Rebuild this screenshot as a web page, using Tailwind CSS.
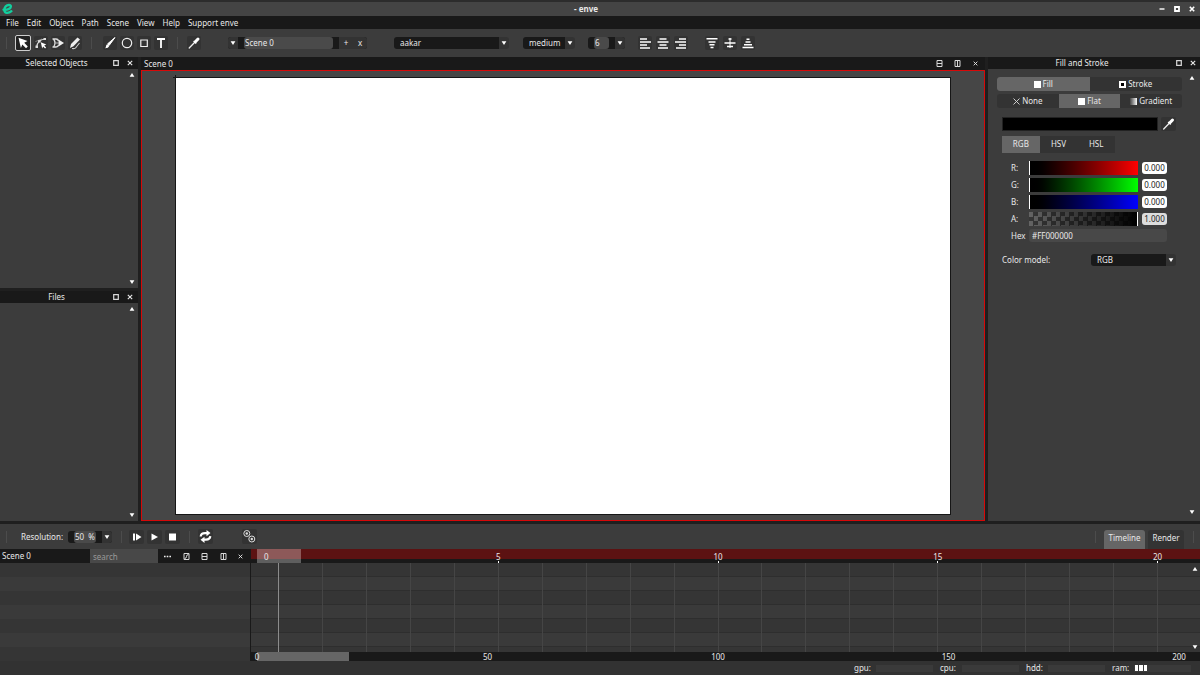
<!DOCTYPE html>
<html lang="en">
<head>
  <meta charset="UTF-8">
  <meta name="viewport" content="width=device-width, initial-scale=1.0">
  <title>enve</title>
  <script src="https://cdn.jsdelivr.net/npm/@tailwindcss/browser@4"></script>
</head>
<body class="min-h-screen flex flex-col overflow-hidden bg-[#1f1f1f] text-[#e8e8e8] text-[8px] leading-[12px] font-['Noto_Sans','Open_Sans',sans-serif]">

  <!-- Shared icons -->
  <svg class="hidden">
    <symbol id="down" viewBox="0 0 6 6"><path d="M.6 1.200h4.800L3 5z" fill="#fff"/></symbol>
    <symbol id="up" viewBox="0 0 6 6"><path d="M.6 4.800h4.800L3 1z" fill="#fff"/></symbol>
    <symbol id="close" viewBox="0 0 6 6"><path d="M.8.8l4.4 4.4M5.2.8L.8 5.2" stroke="#e8e8e8" stroke-width="1.1"/></symbol>
    <symbol id="float" viewBox="0 0 6 6"><path d="M.7.7h4.6v4.6H.7z" fill="none" stroke="#d8d8d8" stroke-width="1.2"/></symbol>
    <symbol id="split-h" viewBox="0 0 7 7"><path d="M1 .5h5v6H1zM1 3.5h5" fill="none" stroke="#d8d8d8"/></symbol>
    <symbol id="split-v" viewBox="0 0 7 7"><path d="M1 .5h5v6H1zM3.500 .5v6" fill="none" stroke="#d8d8d8"/></symbol>
    <symbol id="picker" viewBox="0 0 14 14"><path d="M2.2 12L8 6" stroke="#eee" stroke-width="1.3" stroke-linecap="round"/><path d="M6.6 4.9l2.6 2.6" stroke="#fff" stroke-width="1.4"/><path d="M8.6 5.5L11 3" stroke="#fff" stroke-width="3" stroke-linecap="round"/></symbol>
  </svg>

  <!-- Title bar -->
  <header class="h-4 shrink-0 flex items-center border-t-2 border-[#2c2c2c] bg-[#444] px-[2px]">
    <svg class="w-[11px] h-3" viewBox="0 0 11 12"><path d="M1.500 6.700C5 7.200 8.800 5.800 8.900 3.600C9 1.600 5.600 1.400 3.700 3.400C1.700 5.600 1.800 9.700 4.800 9.900C6.700 10 8.200 9.300 9.400 8.200" fill="none" stroke="#12cf9f" stroke-width="2.300" stroke-linecap="round"/></svg>
    <h1 class="flex-1 text-center font-bold">- enve</h1>
    <div class="flex gap-[9px] pr-[3px]">
      <button type="button" aria-label="Minimize"><svg class="w-[6px] h-[6px]" viewBox="0 0 6 6"><path d="M.5 3h5" stroke="#fff" stroke-width="1.4"/></svg></button>
      <button type="button" aria-label="Maximize"><svg class="w-[6px] h-[6px]" viewBox="0 0 6 6"><path d="M1 1h4v4H1z" fill="none" stroke="#fff" stroke-width="1.8"/></svg></button>
      <button type="button" aria-label="Close"><svg class="w-[6px] h-[6px]" viewBox="0 0 6 6"><path d="M.8.8l4.4 4.4M5.2.8L.8 5.2" stroke="#fff" stroke-width="1.6"/></svg></button>
    </div>
  </header>

  <!-- Menu -->
  <nav class="h-[13px] shrink-0 flex items-center gap-2 pl-[6px] bg-[#191919]">
    <button type="button">File</button>
    <button type="button">Edit</button>
    <button type="button">Object</button>
    <button type="button">Path</button>
    <button type="button">Scene</button>
    <button type="button">View</button>
    <button type="button">Help</button>
    <button type="button">Support enve</button>
  </nav>

  <!-- Tools -->
  <div class="h-7 shrink-0 flex items-center bg-[#3c3c3c] pl-[6px]">
    <div class="w-px h-3 bg-[#4c4c4c]"></div>
    <div class="flex items-center gap-[3px] ml-2">
      <button type="button" aria-label="Select" class="w-4 h-4 rounded-[2px] border border-[#ccc] bg-[#222]"><svg class="w-[14px] h-[14px]" viewBox="0 0 14 14"><path d="M2.500 1.700l9 3.400-3.300 1.600 3.600 3.800-1.800 1.800-3.700-3.800-1.400 3.400z" fill="#fff"/></svg></button>
      <button type="button" aria-label="Edit points" class="w-[14px] h-[14px] rounded-[2px] bg-[#333]"><svg viewBox="0 0 14 14"><path d="M2.800 11C3 6 5.500 3.800 11 3" fill="none" stroke="#ddd" stroke-width="1.200"/><path d="M1.500 9.500h2.500v2.500H1.500zM9.500 2h2.500v2H9.500zM4 4h2.600v2.600H4z" fill="#ddd"/><path d="M1.500 5.500L8 3" stroke="#bbb" stroke-width=".6"/><path d="M6.800 6.300l5.500 2.200-2.100.9 1.900 2-1 1-2-2-.9 2z" fill="#fff"/></svg></button>
      <button type="button" aria-label="Path boundary" class="w-[14px] h-[14px] rounded-[2px] bg-[#333]"><svg viewBox="0 0 14 14"><path d="M1.500 3h3.500q2 0 2.500 2M1.500 11h3.500q2 0 2.500-2M2.500 3q3 4 0 8" fill="none" stroke="#ddd" stroke-width="1.300"/><path d="M7.500 3.500v7L13 7z" fill="#eee"/><path d="M4.500 7h3" stroke="#ddd" stroke-width=".8"/></svg></button>
      <button type="button" aria-label="Draw path" class="w-[14px] h-[14px] rounded-[2px] bg-[#333]"><svg viewBox="0 0 14 14"><path d="M2 12l1-4 6.500-6.500 2.500 2-6.500 6.800z" fill="#eee"/><path d="M4 12.500q3 .5 4-1t3.500-4.500" fill="none" stroke="#ccc" stroke-width="1.100"/></svg></button>
    </div>
    <div class="w-px h-3 bg-[#4c4c4c] ml-[9px]"></div>
    <div class="flex items-center gap-[3px] ml-[11px]">
      <button type="button" aria-label="Brush" class="w-[14px] h-[14px] rounded-[2px] bg-[#333]"><svg viewBox="0 0 14 14"><path d="M12 1.500L6.300 9.200 4.700 7.800z" fill="#fff" stroke="#fff" stroke-width="1"/><path d="M4.500 8.200l1.800 1.600q-.8 2.500-4.300 2.500 1.200-.8 1-2.300.3-1.500 1.500-1.800z" fill="#fff"/></svg></button>
      <button type="button" aria-label="Circle" class="w-[14px] h-[14px] rounded-[2px] bg-[#333]"><svg viewBox="0 0 14 14"><circle cx="7" cy="7" r="4.700" fill="none" stroke="#eee" stroke-width="1.200"/></svg></button>
      <button type="button" aria-label="Rectangle" class="w-[14px] h-[14px] rounded-[2px] bg-[#333]"><svg viewBox="0 0 14 14"><path d="M3.800 4h6.500v6.500H3.800z" fill="none" stroke="#eee" stroke-width="1.200"/></svg></button>
      <button type="button" aria-label="Text" class="w-[14px] h-[14px] rounded-[2px] bg-[#333]"><svg viewBox="0 0 14 14"><path d="M3 3h8M7 3v9" stroke="#fff" stroke-width="1.800" fill="none"/></svg></button>
    </div>
    <div class="w-px h-3 bg-[#4c4c4c] ml-[9px]"></div>
    <button type="button" aria-label="Pick color" class="w-[14px] h-[14px] rounded-[2px] bg-[#333] ml-[9px]"><svg class="w-[14px] h-[14px]"><use href="#picker"/></svg></button>

    <div class="flex h-3 ml-[27px] rounded-[3px] overflow-hidden bg-[#191919]">
      <button type="button" aria-label="Scene list" class="w-[10px] flex items-center justify-center bg-[#333]"><svg class="w-[6px] h-[6px]"><use href="#down"/></svg></button>
      <input aria-label="Scene name" value="Scene 0" class="w-[89px] mx-[6px] pl-px rounded-[3px] bg-[#4a4a4a]">
      <button type="button" class="w-[14px] bg-[#333]">+</button>
      <button type="button" class="w-[14px] bg-[#333]">x</button>
    </div>
    <div class="flex h-3 ml-[27px] rounded-[3px] overflow-hidden">
      <select aria-label="Font family" class="appearance-none w-[105px] pl-[6px] bg-[#191919]"><option>aakar</option></select>
      <span class="w-[10px] flex items-center justify-center bg-[#333]"><svg class="w-[6px] h-[6px]"><use href="#down"/></svg></span>
    </div>
    <div class="flex h-3 ml-[14px] rounded-[3px] overflow-hidden">
      <select aria-label="Font style" class="appearance-none w-[42px] pl-[6px] bg-[#191919]"><option>medium</option></select>
      <span class="w-[10px] flex items-center justify-center bg-[#333]"><svg class="w-[6px] h-[6px]"><use href="#down"/></svg></span>
    </div>
    <div class="flex h-3 ml-[13px] rounded-[3px] overflow-hidden bg-[#191919]">
      <input aria-label="Font size" value="6" class="w-[15px] mx-[6px] pl-px rounded-[3px] bg-[#4a4a4a]">
      <span class="w-[10px] flex items-center justify-center bg-[#333]"><svg class="w-[6px] h-[6px]"><use href="#down"/></svg></span>
    </div>
    <div class="flex gap-1 ml-[13px]">
      <button type="button" aria-label="Align left" class="w-[14px] h-[14px] rounded-[2px] bg-[#333]"><svg viewBox="0 0 14 14"><path d="M2 3h7M2 6h11M2 9h7M2 12h10" stroke="#fff" stroke-width="1.500"/></svg></button>
      <button type="button" aria-label="Align center" class="w-[14px] h-[14px] rounded-[2px] bg-[#333]"><svg viewBox="0 0 14 14"><path d="M3.500 3h7M1.500 6h11M3.500 9h7M2 12h10" stroke="#fff" stroke-width="1.500"/></svg></button>
      <button type="button" aria-label="Align right" class="w-[14px] h-[14px] rounded-[2px] bg-[#333]"><svg viewBox="0 0 14 14"><path d="M5 3h7M1 6h11M5 9h7M2 12h10" stroke="#fff" stroke-width="1.500"/></svg></button>
    </div>
    <div class="flex gap-1 ml-[17px]">
      <button type="button" aria-label="Align top" class="w-[14px] h-[14px] rounded-[2px] bg-[#333]"><svg viewBox="0 0 14 14"><path d="M1.500 2.800h11M3.500 6h7M4.500 8.800h5M5.500 11.500h3" stroke="#fff" stroke-width="1.500"/></svg></button>
      <button type="button" aria-label="Align middle" class="w-[14px] h-[14px] rounded-[2px] bg-[#333]"><svg viewBox="0 0 14 14"><path d="M5.500 3h3M1.500 7h11M4 10.500h6" stroke="#fff" stroke-width="1.600"/><path d="M7 2v10" stroke="#fff"/></svg></button>
      <button type="button" aria-label="Align bottom" class="w-[14px] h-[14px] rounded-[2px] bg-[#333]"><svg viewBox="0 0 14 14"><path d="M5.500 3.200h3M4.500 6h5M3 8.700h8M1.500 11.500h11" stroke="#fff" stroke-width="1.500"/></svg></button>
    </div>
  </div>

  <main class="flex-1 flex gap-[3px] min-h-0">
    <!-- Left docks -->
    <aside class="w-[138px] shrink-0 flex flex-col gap-[3px]">
      <section class="flex-1 flex flex-col bg-[#3c3c3c]">
        <div class="h-3 flex items-center bg-[#191919] pr-[5px]">
          <h2 class="flex-1 text-center">Selected Objects</h2>
          <button type="button" aria-label="Float" class="mr-2"><svg class="w-[6px] h-[6px]"><use href="#float"/></svg></button>
          <button type="button" aria-label="Close"><svg class="w-[6px] h-[6px]"><use href="#close"/></svg></button>
        </div>
        <div class="flex-1 flex flex-col justify-between items-end pt-[3px] pb-[3px] pr-[3px]">
          <svg class="w-[6px] h-[6px]"><use href="#up"/></svg>
          <svg class="w-[6px] h-[6px]"><use href="#down"/></svg>
        </div>
      </section>
      <section class="flex-1 flex flex-col bg-[#3c3c3c]">
        <div class="h-3 flex items-center bg-[#191919] pr-[5px]">
          <h2 class="flex-1 text-center">Files</h2>
          <button type="button" aria-label="Float" class="mr-2"><svg class="w-[6px] h-[6px]"><use href="#float"/></svg></button>
          <button type="button" aria-label="Close"><svg class="w-[6px] h-[6px]"><use href="#close"/></svg></button>
        </div>
        <div class="flex-1 flex flex-col justify-between items-end pt-[3px] pb-[3px] pr-[3px]">
          <svg class="w-[6px] h-[6px]"><use href="#up"/></svg>
          <svg class="w-[6px] h-[6px]"><use href="#down"/></svg>
        </div>
      </section>
    </aside>

    <!-- Canvas -->
    <section class="flex-1 flex flex-col">
      <div class="h-[13px] flex items-center bg-[#191919] pl-[3px] pr-[7px]">
        <h2 class="flex-1">Scene 0</h2>
        <button type="button" aria-label="Split horizontally" class="mr-[11px]"><svg class="w-[7px] h-[7px]"><use href="#split-h"/></svg></button>
        <button type="button" aria-label="Split vertically" class="mr-[12px]"><svg class="w-[7px] h-[7px]"><use href="#split-v"/></svg></button>
        <button type="button" aria-label="Close"><svg class="w-[5px] h-[5px]"><use href="#close"/></svg></button>
      </div>
      <div class="flex-1 flex border border-[#d80808] bg-[#464646] pl-[33px] pr-[33px] pt-[6px] pb-[5px]">
        <div class="relative flex-1 border border-[#161616] bg-white">
          <!-- Origin mark -->
          <i class="absolute -left-[3px] -top-px w-[3px] h-px bg-[#161616]"></i>
          <i class="absolute -left-px -top-[3px] w-px h-[3px] bg-[#161616]"></i>
        </div>
      </div>
    </section>

    <!-- Fill and stroke -->
    <aside class="w-[212px] shrink-0 flex flex-col bg-[#3c3c3c]">
      <div class="h-3 flex items-center bg-[#191919] pr-1">
        <h2 class="flex-1 text-center">Fill and Stroke</h2>
        <button type="button" aria-label="Float" class="mr-2"><svg class="w-[6px] h-[6px]"><use href="#float"/></svg></button>
        <button type="button" aria-label="Close"><svg class="w-[6px] h-[6px]"><use href="#close"/></svg></button>
      </div>
      <div class="flex-1 flex">
        <div class="flex-1 pl-[9px] pt-2">
          <div class="grid grid-cols-2 h-[14px] rounded-[3px] overflow-hidden bg-[#333]">
            <button type="button" class="flex items-center justify-center gap-[2px] bg-[#666]"><span class="w-[7px] h-[7px] bg-white"></span>Fill</button>
            <button type="button" class="flex items-center justify-center gap-[2px]"><span class="w-[7px] h-[7px] border-2 border-white bg-black"></span>Stroke</button>
          </div>
          <div class="grid grid-cols-3 h-[14px] mt-[3px] rounded-[3px] overflow-hidden bg-[#333]">
            <button type="button" class="flex items-center justify-center gap-[2px]"><svg class="w-[7px] h-[7px]" viewBox="0 0 7 7"><path d="M.5.5l6 6M6.500.5l-6 6" stroke="#ddd" stroke-width=".9"/></svg>None</button>
            <button type="button" class="flex items-center justify-center gap-[2px] bg-[#666]"><span class="w-[7px] h-[7px] bg-white"></span>Flat</button>
            <button type="button" class="flex items-center justify-center gap-[2px]"><span class="w-[7px] h-[7px] bg-linear-to-r from-[#444] to-white"></span>Gradient</button>
          </div>

          <div class="pl-[5px]">
            <div class="flex gap-[3px] mt-[9px]">
              <div class="w-[156px] h-[14px] border border-[#222] bg-black"></div>
              <button type="button" aria-label="Pick color" class="w-[15px] h-[14px] rounded-[2px] bg-[#333]"><svg class="w-[15px] h-[14px]"><use href="#picker"/></svg></button>
            </div>
            <div class="grid grid-cols-3 w-[113px] h-[17px] mt-[5px] bg-[#333]">
              <button type="button" class="pb-[2px] bg-[#666]">RGB</button>
              <button type="button" class="pb-[2px]">HSV</button>
              <button type="button" class="pb-[2px]">HSL</button>
            </div>

            <div class="grid grid-cols-[18px_109px_29px] items-center gap-y-[3px] mt-2 pl-[9px]">
              <label for="red">R:</label>
              <input id="red" type="range" min="0" max="1" step="0.001" value="0" class="appearance-none w-full h-[14px] bg-linear-to-r from-black to-[#f00] [&::-webkit-slider-thumb]:appearance-none [&::-webkit-slider-thumb]:w-px [&::-webkit-slider-thumb]:h-[14px] [&::-webkit-slider-thumb]:bg-white">
              <input aria-label="Red value" value="0.000" class="h-3 ml-1 rounded-[3px] bg-white text-center text-[#222]">
              <label for="green">G:</label>
              <input id="green" type="range" min="0" max="1" step="0.001" value="0" class="appearance-none w-full h-[14px] bg-linear-to-r from-black to-[#0f0] [&::-webkit-slider-thumb]:appearance-none [&::-webkit-slider-thumb]:w-px [&::-webkit-slider-thumb]:h-[14px] [&::-webkit-slider-thumb]:bg-white">
              <input aria-label="Green value" value="0.000" class="h-3 ml-1 rounded-[3px] bg-white text-center text-[#222]">
              <label for="blue">B:</label>
              <input id="blue" type="range" min="0" max="1" step="0.001" value="0" class="appearance-none w-full h-[14px] bg-linear-to-r from-black to-[#00f] [&::-webkit-slider-thumb]:appearance-none [&::-webkit-slider-thumb]:w-px [&::-webkit-slider-thumb]:h-[14px] [&::-webkit-slider-thumb]:bg-white">
              <input aria-label="Blue value" value="0.000" class="h-3 ml-1 rounded-[3px] bg-white text-center text-[#222]">
              <label for="alpha">A:</label>
              <input id="alpha" type="range" min="0" max="1" step="0.001" value="1" class="appearance-none w-full h-[14px] bg-[linear-gradient(to_right,transparent,#000),repeating-conic-gradient(#363636_0_25%,#646464_0_50%)] bg-[size:100%_100%,9px_9px] [&::-webkit-slider-thumb]:appearance-none [&::-webkit-slider-thumb]:w-px [&::-webkit-slider-thumb]:h-[14px] [&::-webkit-slider-thumb]:bg-white">
              <input aria-label="Alpha value" value="1.000" class="h-3 ml-1 rounded-[3px] bg-[#ddd] text-center text-[#222]">
            </div>
            <div class="flex items-center mt-[3px] pl-[9px]">
              <label for="hex" class="w-[18px]">Hex</label>
              <input id="hex" value="#FF000000" class="w-[138px] h-[13px] pl-[3px] rounded-[3px] bg-[#484848]">
            </div>
            <div class="flex items-center mt-3">
              <label for="model" class="w-[89px]">Color model:</label>
              <select id="model" class="appearance-none w-[75px] h-3 pl-[6px] rounded-l-[3px] bg-[#191919]"><option>RGB</option><option>HSV</option><option>HSL</option></select>
              <span class="w-[10px] h-3 flex items-center justify-center rounded-r-[3px] bg-[#333]"><svg class="w-[6px] h-[6px]"><use href="#down"/></svg></span>
            </div>
          </div>
        </div>
        <div class="w-[18px] flex flex-col justify-between items-end pt-[6px] pb-[6px] pr-[5px]">
          <svg class="w-[6px] h-[6px]"><use href="#up"/></svg>
          <svg class="w-[6px] h-[6px]"><use href="#down"/></svg>
        </div>
      </div>
    </aside>
  </main>

  <!-- Playback bar -->
  <div class="h-[25px] shrink-0 mt-[3px] flex items-center bg-[#3c3c3c] px-[6px]">
    <div class="w-px h-3 bg-[#4c4c4c]"></div>
    <label for="resolution" class="w-[47px] ml-[14px]">Resolution:</label>
    <div class="flex h-3 rounded-[3px] overflow-hidden bg-[#191919]">
      <input id="resolution" value="50  %" class="w-[22px] mx-[6px] pl-px rounded-[3px] bg-[#4a4a4a]">
      <span class="w-[10px] flex items-center justify-center bg-[#333]"><svg class="w-[6px] h-[6px]"><use href="#down"/></svg></span>
    </div>
    <div class="w-px h-3 bg-[#4c4c4c] ml-[9px]"></div>
    <div class="flex gap-[3px] ml-[7px]">
      <button type="button" aria-label="Play from start" class="w-[15px] h-[14px] rounded-[2px] bg-[#333]"><svg class="w-[15px] h-[14px]" viewBox="0 0 15 14"><path d="M4 3.500h2v7H4zM7 3.500v7L12.500 7z" fill="#fff"/></svg></button>
      <button type="button" aria-label="Play" class="w-[15px] h-[14px] rounded-[2px] bg-[#333]"><svg class="w-[15px] h-[14px]" viewBox="0 0 15 14"><path d="M4.500 3.500v7L11 7z" fill="#fff"/></svg></button>
      <button type="button" aria-label="Stop" class="w-[15px] h-[14px] rounded-[2px] bg-[#333]"><svg class="w-[15px] h-[14px]" viewBox="0 0 15 14"><path d="M4 3.500h7v7H4z" fill="#fff"/></svg></button>
    </div>
    <div class="w-px h-3 bg-[#4c4c4c] ml-[9px]"></div>
    <button type="button" aria-label="Loop" class="w-[15px] h-[15px] rounded-[2px] bg-[#333] ml-2"><svg class="w-[15px] h-[15px]" viewBox="0 0 15 15"><path d="M2.700 7.500Q3 4.200 7 4.200h2.500M12.300 7.200Q12 10.600 8 10.600H5.500" fill="none" stroke="#fff" stroke-width="2.200"/><path d="M8.500 1v6.200l4-3.200zM6.500 7.700v6.200l-4-3.200z" fill="#fff"/></svg></button>
    <button type="button" aria-label="Onion skin" class="w-[15px] h-[15px] rounded-[2px] bg-[#333] ml-[29px]"><svg class="w-[15px] h-[15px]" viewBox="0 0 15 15"><g fill="none" stroke="#ddd"><circle cx="4.800" cy="4.500" r="3"/><circle cx="9.800" cy="10" r="3"/></g><circle cx="4.800" cy="4.500" r="1.200" fill="#ddd"/><circle cx="9.800" cy="10" r="1.200" fill="#ddd"/></svg></button>
    <div class="flex-1"></div>
    <div class="w-px h-3 bg-[#4c4c4c] mr-2"></div>
    <div class="self-end flex gap-[3px] h-[19px] mr-[9px]">
      <button type="button" class="w-[41px] pb-1 rounded-t-[3px] bg-[#666]">Timeline</button>
      <button type="button" class="w-9 pb-1 rounded-t-[3px] bg-[#333]">Render</button>
    </div>
    <div class="w-px h-3 bg-[#4c4c4c]"></div>
  </div>

  <!-- Timeline -->
  <section class="shrink-0 flex h-28">
    <div class="w-[251px] shrink-0 flex flex-col border-r border-[#191919]">
      <div class="h-[14px] shrink-0 flex items-center bg-[#191919] pr-[7px]">
        <span class="w-[90px] pl-[2px]">Scene 0</span>
        <input aria-label="Search" placeholder="search" class="w-[68px] h-[14px] pl-[3px] bg-[#484848] placeholder:text-[#999]">
        <div class="flex-1 flex items-center justify-between pl-[6px]">
          <button type="button" aria-label="More"><svg class="w-[7px] h-[7px]" viewBox="0 0 7 7"><path d="M0 3.500h1.600M2.700 3.500h1.600M5.400 3.500H7" stroke="#eee" stroke-width="1.300"/></svg></button>
          <button type="button" aria-label="Graph"><svg class="w-[7px] h-[7px]" viewBox="0 0 7 7"><path d="M1 .5h5v6H1zM1.500 5.500q2 0 2-2t2-2" fill="none" stroke="#d8d8d8"/></svg></button>
          <button type="button" aria-label="Split horizontally"><svg class="w-[7px] h-[7px]"><use href="#split-h"/></svg></button>
          <button type="button" aria-label="Split vertically"><svg class="w-[7px] h-[7px]"><use href="#split-v"/></svg></button>
          <button type="button" aria-label="Close"><svg class="w-[5px] h-[5px]"><use href="#close"/></svg></button>
        </div>
      </div>
      <div class="flex-1 bg-[repeating-linear-gradient(#353535_0_14px,#3a3a3a_14px_28px)]"></div>
    </div>

    <div class="relative flex-1 flex flex-col overflow-hidden">
      <!-- Frame ruler -->
      <div class="h-[14px] shrink-0 bg-[linear-gradient(#5c1212_0_10px,#191919_10px)] pl-[27px]">
        <div id="ruler" class="grid grid-cols-21 -mr-px"></div>
      </div>
      <div class="flex-1 bg-[repeating-linear-gradient(#353535_0_13px,#2e2e2e_13px_14px,#3a3a3a_14px_27px,#2e2e2e_27px_28px)] pl-[27px]">
        <div id="columns" class="grid grid-cols-21 -mr-px h-full"></div>
      </div>
      <div class="h-[9px] shrink-0 flex bg-[#191919] pl-[6px] pr-[21px]">
        <div class="relative flex-1">
          <div class="absolute inset-y-0 left-0 w-1/10 bg-[#666]"></div>
          <div id="range" class="relative grid grid-cols-4 leading-[9px]"></div>
        </div>
      </div>
      <!-- Current frame -->
      <div class="absolute left-[6px] top-0 w-[44px] h-[14px] pl-[7px] pt-[2px] leading-[12px] bg-white/30">0</div>
      <div class="absolute left-[27px] top-[14px] bottom-[9px] w-px bg-[#8c8c8c]"></div>
      <div class="absolute right-[2px] top-[17px] bottom-[11px] flex flex-col justify-between">
        <svg class="w-[6px] h-[6px]"><use href="#up"/></svg>
        <svg class="w-[6px] h-[6px]"><use href="#down"/></svg>
      </div>
    </div>
  </section>

  <!-- Usage -->
  <footer class="h-[14px] shrink-0 flex items-center justify-end gap-[7px] bg-[#323232] pr-[9px]">
    <div class="flex items-center"><span class="w-[22px]">gpu:</span><div class="w-[57px] h-[7px] bg-[#3a3a3a]"></div></div>
    <div class="flex items-center"><span class="w-[22px]">cpu:</span><div class="w-[57px] h-[7px] bg-[#3a3a3a]"></div></div>
    <div class="flex items-center"><span class="w-[22px]">hdd:</span><div class="w-[57px] h-[7px] bg-[#3a3a3a]"></div></div>
    <div class="flex items-center"><span class="w-[22px]">ram:</span><div class="w-[57px] h-[7px] flex items-center gap-px pl-px bg-[#3a3a3a]"><i class="w-[3px] h-[6px] bg-white"></i><i class="w-[4px] h-[6px] bg-white"></i><i class="w-[3px] h-[6px] bg-white"></i></div></div>
  </footer>

  <script>
    const ruler = document.getElementById('ruler');
    const columns = document.getElementById('columns');
    const range = document.getElementById('range');

    // One cell per frame, with a label and a tick on every fifth
    for (let frame = 0; frame <= 20; frame++) {
      const label = frame > 0 && frame % 5 === 0
        ? `<div class="w-px h-[14px] flex flex-col items-center justify-between"><span class="h-[11px] pt-[2px]">${frame}</span><i class="w-px h-[2px] bg-white"></i></div>`
        : '';
      ruler.insertAdjacentHTML('beforeend', `<div>${label}</div>`);
      columns.insertAdjacentHTML('beforeend', '<div class="border-l border-[#454545]"></div>');
    }

    // Labels of the whole frame range
    [0, 50, 100, 150].forEach(frame => {
      const last = frame === 150 ? '<span class="w-0 flex justify-center">200</span>' : '';
      range.insertAdjacentHTML('beforeend', `<div class="flex justify-between"><span class="w-0 flex justify-center">${frame}</span>${last}</div>`);
    });
  </script>
</body>
</html>
